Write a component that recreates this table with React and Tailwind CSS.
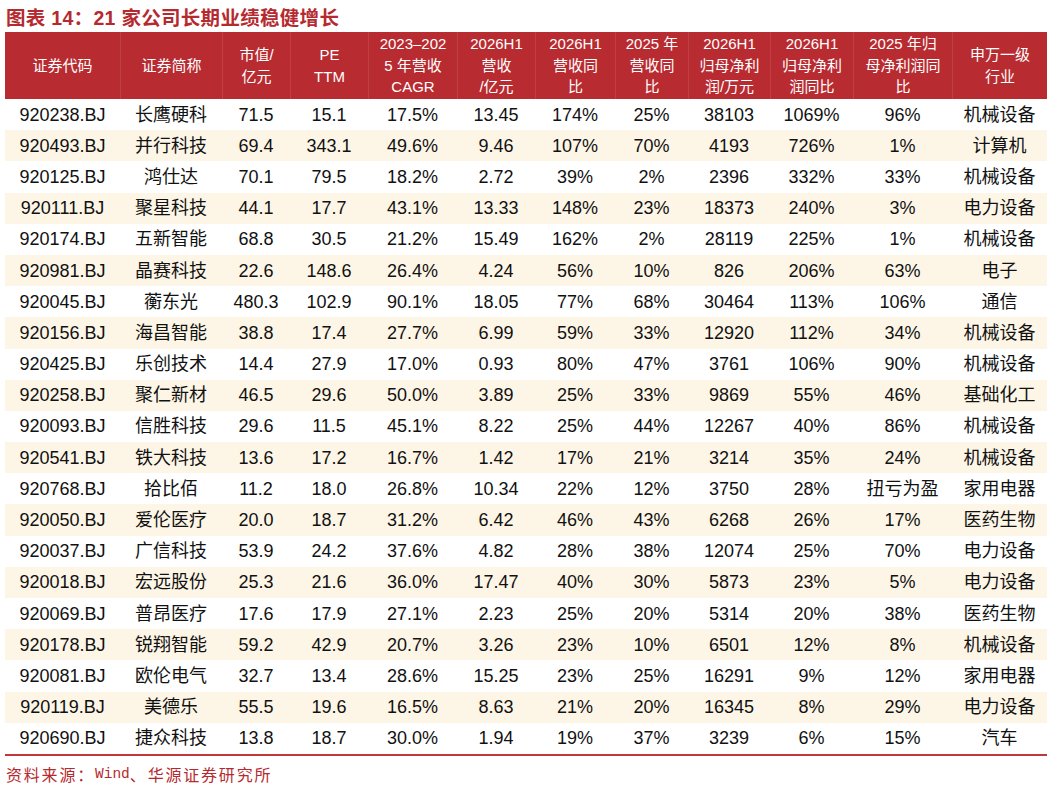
import React from "react";

const headers = [
  ["证券代码"],
  ["证券简称"],
  ["市值/", "亿元"],
  ["PE", "TTM"],
  ["2023–202", "5 年营收", "CAGR"],
  ["2026H1", "营收", "/亿元"],
  ["2026H1", "营收同", "比"],
  ["2025 年", "营收同", "比"],
  ["2026H1", "归母净利", "润/万元"],
  ["2026H1", "归母净利", "润同比"],
  ["2025 年归", "母净利润同", "比"],
  ["申万一级", "行业"],
];

const rows = [
  ["920238.BJ", "长鹰硬科", "71.5", "15.1", "17.5%", "13.45", "174%", "25%", "38103", "1069%", "96%", "机械设备"],
  ["920493.BJ", "并行科技", "69.4", "343.1", "49.6%", "9.46", "107%", "70%", "4193", "726%", "1%", "计算机"],
  ["920125.BJ", "鸿仕达", "70.1", "79.5", "18.2%", "2.72", "39%", "2%", "2396", "332%", "33%", "机械设备"],
  ["920111.BJ", "聚星科技", "44.1", "17.7", "43.1%", "13.33", "148%", "23%", "18373", "240%", "3%", "电力设备"],
  ["920174.BJ", "五新智能", "68.8", "30.5", "21.2%", "15.49", "162%", "2%", "28119", "225%", "1%", "机械设备"],
  ["920981.BJ", "晶赛科技", "22.6", "148.6", "26.4%", "4.24", "56%", "10%", "826", "206%", "63%", "电子"],
  ["920045.BJ", "蘅东光", "480.3", "102.9", "90.1%", "18.05", "77%", "68%", "30464", "113%", "106%", "通信"],
  ["920156.BJ", "海昌智能", "38.8", "17.4", "27.7%", "6.99", "59%", "33%", "12920", "112%", "34%", "机械设备"],
  ["920425.BJ", "乐创技术", "14.4", "27.9", "17.0%", "0.93", "80%", "47%", "3761", "106%", "90%", "机械设备"],
  ["920258.BJ", "聚仁新材", "46.5", "29.6", "50.0%", "3.89", "25%", "33%", "9869", "55%", "46%", "基础化工"],
  ["920093.BJ", "信胜科技", "29.6", "11.5", "45.1%", "8.22", "25%", "44%", "12267", "40%", "86%", "机械设备"],
  ["920541.BJ", "铁大科技", "13.6", "17.2", "16.7%", "1.42", "17%", "21%", "3214", "35%", "24%", "机械设备"],
  ["920768.BJ", "拾比佰", "11.2", "18.0", "26.8%", "10.34", "22%", "12%", "3750", "28%", "扭亏为盈", "家用电器"],
  ["920050.BJ", "爱伦医疗", "20.0", "18.7", "31.2%", "6.42", "46%", "43%", "6268", "26%", "17%", "医药生物"],
  ["920037.BJ", "广信科技", "53.9", "24.2", "37.6%", "4.82", "28%", "38%", "12074", "25%", "70%", "电力设备"],
  ["920018.BJ", "宏远股份", "25.3", "21.6", "36.0%", "17.47", "40%", "30%", "5873", "23%", "5%", "电力设备"],
  ["920069.BJ", "普昂医疗", "17.6", "17.9", "27.1%", "2.23", "25%", "20%", "5314", "20%", "38%", "医药生物"],
  ["920178.BJ", "锐翔智能", "59.2", "42.9", "20.7%", "3.26", "23%", "10%", "6501", "12%", "8%", "机械设备"],
  ["920081.BJ", "欧伦电气", "32.7", "13.4", "28.6%", "15.25", "23%", "25%", "16291", "9%", "12%", "家用电器"],
  ["920119.BJ", "美德乐", "55.5", "19.6", "16.5%", "8.63", "21%", "20%", "16345", "8%", "29%", "电力设备"],
  ["920690.BJ", "捷众科技", "13.8", "18.7", "30.0%", "1.94", "19%", "37%", "3239", "6%", "15%", "汽车"],
];

const cols =
  "grid grid-cols-[115px_102px_68px_78px_89px_78px_80px_73px_82px_83px_99px_95px]";

export default function App() {
  return (
    <div
      className="w-[1053px] h-[791px] bg-white overflow-hidden"
      style={{ fontFamily: '"Liberation Sans", Arial, "Noto Sans CJK SC", sans-serif' }}
    >
      <div className="h-[32px] pt-[6px] pl-[6px] flex items-center text-[19.5px] font-bold text-[#b52a2f] leading-none whitespace-nowrap tracking-[0.3px]">
        图表 14：21 家公司长期业绩稳健增长
      </div>
      <div className="ml-[5px] w-[1042px]">
        <div className={`${cols} h-[67px] bg-[#b82b31] text-white text-[15px] leading-[21.5px]`}>
          {headers.map((h, i) => (
            <div
              key={i}
              className={`flex flex-col items-center justify-center text-center ${
                i > 0 ? "border-l border-[#c23f44]" : ""
              }`}
            >
              {h.map((l, j) => (
                <div key={j} className="whitespace-nowrap">
                  {l}
                </div>
              ))}
            </div>
          ))}
        </div>
        {rows.map((r, ri) => (
          <div
            key={ri}
            className={`${cols} h-[31.2px] text-[18px] text-[#111] ${
              ri % 2 === 1 ? "bg-[#fdf6e7]" : "bg-white"
            }`}
          >
            {r.map((c, ci) => (
              <div key={ci} className="flex items-center justify-center whitespace-nowrap leading-none">
                {c}
              </div>
            ))}
          </div>
        ))}
        <div className="h-[2px] bg-[#c4363a]"></div>
      </div>
      <div className="mt-[8px] ml-[6px] flex items-center h-[20px] text-[#b52a2f] whitespace-nowrap leading-none">
        <span className="text-[16px] tracking-[1.8px]" style={{ fontFamily: '"Noto Sans CJK SC", sans-serif' }}>
          资料来源：
        </span>
        <span className="text-[14.5px]" style={{ fontFamily: '"Liberation Mono", monospace' }}>
          Wind
        </span>
        <span className="text-[16px] tracking-[1.8px]" style={{ fontFamily: '"Noto Sans CJK SC", sans-serif' }}>
          、华源证券研究所
        </span>
      </div>
    </div>
  );
}
